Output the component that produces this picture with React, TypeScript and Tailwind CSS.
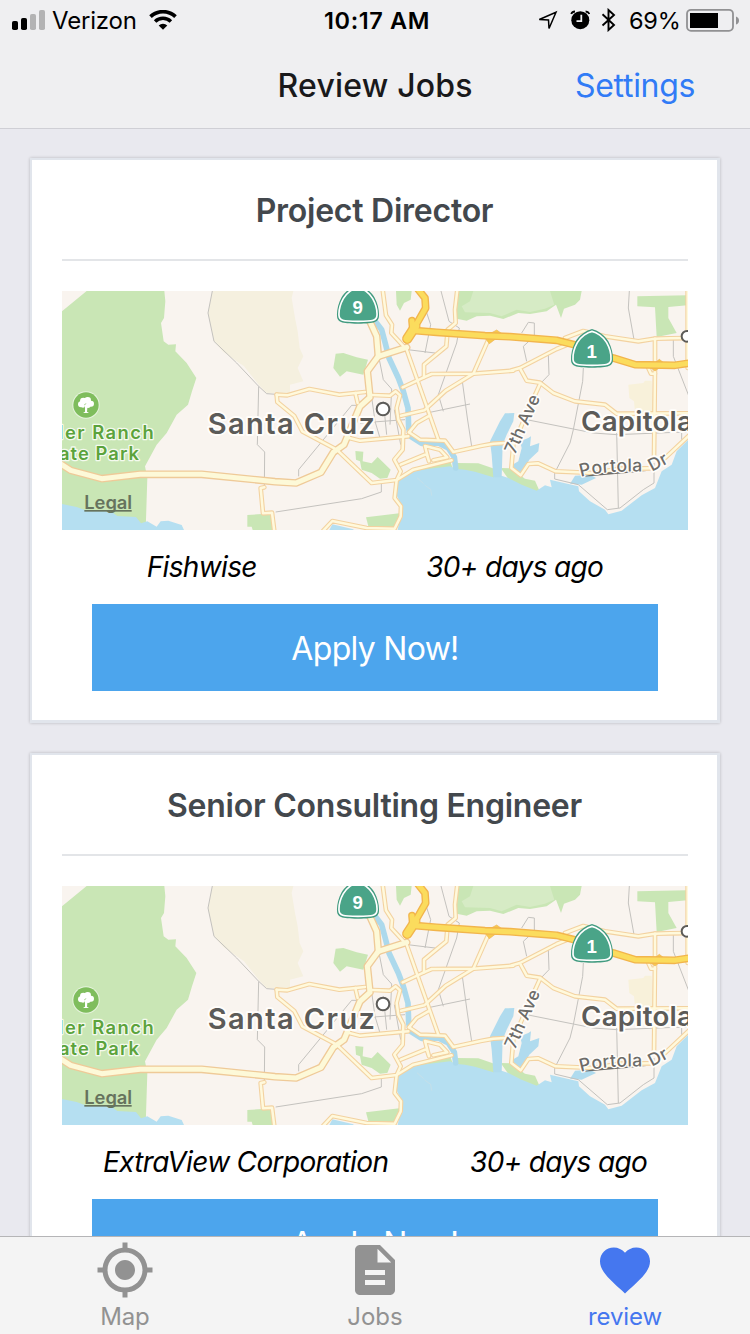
import React, { useId } from "react";
import { MdGpsFixed, MdDescription, MdFavorite } from "react-icons/md";

const mainRoads = [
  "M-10 520 L32 547 L125 572 L240 559 L425 559 L645 581 L708 585 L783 553 L820 493 L852 470 L875 415 L900 355 L930 328 L922 250 L955 205 L1040 178",
  "M955 205 L950 145 L925 90",
];

const minorRoads = [
  "M613 598 L602 600 L609 676 L636 674 L643 730",
  "M650 320 L682 322 L748 303 L838 320 L915 312",
  "M650 320 L652 342 L703 384 L727 430 L830 485 L935 585 L1010 576 L1060 545 L1130 528 L1175 517",
  "M886 315 L893 345",
  "M938 321 L990 323 L1007 310 L1020 322 L1010 360 L1015 395 L1030 425 L1028 485 L1003 515 L1022 550 L1010 576 L1004 630 L1023 655 L1022 685 L1004 722 L920 720 L817 699 L790 728",
  "M868 450 L900 458 L1045 445",
  "M1047 433 L1080 455 L1155 458 L1180 492 L1262 474 L1300 467 L1335 465",
  "M1022 530 L1100 498 L1107 520 L1095 474 L1140 485 L1162 508 L1120 517",
  "M968 5 L978 82 L996 110 L994 135 L1040 185 L1135 455",
  "M1192 5 L1185 65 L1187 105 L1163 125 L1159 175 L1092 230 L1092 268",
  "M1028 298 L1092 268 L1115 258 L1240 257 L1360 248",
  "M1023 383 L1093 367 L1157 308 L1240 257 L1285 155",
  "M1047 433 L1070 405 L1105 385",
  "M1355 247 L1380 240 L1490 183 L1530 167",
  "M1515 150 L1570 129 L1635 145 L1735 160 L1785 152 L1830 151 L1900 150",
  "M1382 245 L1400 278 L1440 284 L1480 315 L1545 340 L1635 350 L1670 377 L1890 376",
  "M1440 288 L1405 365 L1360 470 L1354 540 L1382 562 L1405 528 L1435 526 L1487 550 L1600 555 L1680 542 L1780 541",
  "M1785 152 L1785 238 L1782 510",
  "M1765 240 L1773 257 L1785 257",
  "M1890 440 L1810 515",
  "M1883 5 L1883 240",
];

const highways = [
  "M1075 5 L1095 30 L1097 60 L1070 107 L1040 155",
  "M1056 98 L1058 120",
  "M1068 128 L1130 133 L1275 143 L1350 146 L1490 157 L1550 172 L1660 210 L1725 230 L1845 232 L1890 225",
];

const streets =
  "M457 9 L444 75 L462 160 L530 225 L596 295 L620 317 L648 319 M596 295 L592 470 L614 492 L613 600 M716 565 L716 545 L875 352 L895 352 M647 672 L905 632 L964 612 L964 585 M957 210 L970 275 L995 303 L990 410 M936 335 L945 400 L960 450 M970 340 L980 440 M900 405 L1035 395 M1100 375 L1230 348 M1003 365 L1022 470 M1043 185 L1125 195 M1097 65 L1112 110 L1095 195 M1143 9 L1167 100 L1198 120 L1190 165 L1135 320 L1150 370 M1207 280 L1222 390 L1235 475 M1385 135 L1405 103 L1423 105 L1423 145 L1390 175 L1400 220 M1465 200 L1467 260 L1440 288 M1708 9 L1705 60 L1722 155 M1570 240 L1568 280 L1540 425 L1530 465 L1484 555 L1484 573 L1555 590 L1642 665 L1680 660 L1750 605 L1782 585 L1782 525 M1400 395 L1600 435 L1670 440 L1845 433 L1890 433 M1670 430 L1675 660 M1840 155 L1840 205 L1888 328 M1865 430 L1865 455";

function Shield({ x, y, label }: { x: number; y: number; label: string }) {
  return (
    <g transform={`translate(${x} ${y})`}>
      <path d="M0 -60 C16 -56 38 -43 50 -22 C59 -5 64 16 63 33 C62 50 52 56 0 56 C-52 56 -62 50 -63 33 C-64 16 -59 -5 -50 -22 C-38 -43 -16 -56 0 -60Z" fill="#429b80" />
      <path d="M0 -53 C14 -50 34 -37 44 -19 C53 -3 58 15 57 31 C56 46 47 49 0 49 C-47 49 -56 46 -57 31 C-58 15 -53 -3 -44 -19 C-34 -37 -14 -50 0 -53Z" fill="#4aa488" stroke="#fff" strokeWidth="5" />
      <text x="-1" y="27" textAnchor="middle" className="fill-white font-['Liberation_Sans'] text-[56px] font-bold">{label}</text>
    </g>
  );
}

function CityMap() {
  const portolaLine = useId();
  return (
    <svg viewBox="6 9 1878 717" className="block h-[239px] w-[626px]" fill="none" strokeLinejoin="round" strokeLinecap="round">
      <rect x="6" y="9" width="1878" height="717" fill="#f9f4ef" />
      <path d="M457 9 L444 75 L462 160 L490 192 L552 235 L596 290 L620 316 L690 316 L690 290 L730 280 L713 240 L730 205 L719 180 L713 130 L705 90 L695 30 L700 9Z" fill="#f5f0df" />
      <path d="M1705 290 L1750 285 L1755 278 L1775 278 L1782 375 L1725 372 L1722 340 L1708 330Z" fill="#f8f1da" />
      <g fill="#c9e6b5">
        <path d="M6 70 L80 9 L313 9 L316 40 L312 90 L303 105 L311 160 L325 170 L348 169 L346 190 L380 225 L409 270 L396 310 L384 350 L350 380 L320 435 L290 470 L255 535 L262 570 L257 726 L6 726Z" />
        <path d="M562 681 L640 676 L640 726 L578 726 L575 716 L562 716Z" />
        <path d="M827 197 L850 195 L890 208 L924 215 L910 260 L860 250 L840 266 L820 240Z" />
        <path d="M886 489 L910 491 L908 520 L935 526 L953 507 L992 545 L982 570 L960 572 L935 555 L905 545 L900 520 L888 515Z" />
        <path d="M918 688 L1018 676 L1018 700 L1003 718 L925 715Z" />
        <path d="M1008 9 L1055 9 L1052 35 L1032 45 L1020 68 L1010 50Z" />
        <path d="M1193 9 L1565 9 L1560 35 L1545 50 L1512 62 L1503 90 L1488 50 L1460 70 L1410 78 L1375 75 L1330 93 L1290 83 L1250 85 L1220 98 L1190 92Z" />
        <path d="M1732 25 L1882 22 L1882 52 L1825 57 L1825 90 L1850 135 L1790 147 L1785 58 L1732 55Z" />
        <path d="M1040 560 L1065 540 L1170 518 L1178 540 L1188 525 L1255 526 L1305 543 L1310 575 L1260 565 L1170 550Z" />
        <path d="M1322 540 L1352 541 L1395 572 L1425 578 L1437 605 L1428 614 L1350 580Z" />
      </g>
      <path d="M1205 55 L1230 40 L1240 9 L1470 9 L1483 50 L1455 62 L1410 72 L1370 65 L1325 85 L1290 75 L1215 73Z" fill="#d6ebc5" />
      <g fill="#b5dff1">
        <path d="M6 648 L50 657 L72 665 L150 668 L172 684 L228 687 L243 706 L262 700 L290 716 L302 700 L325 698 L365 711 L372 726 L6 726Z" />
        <path d="M1013 726 L1020 690 L1026 655 L1009 620 L1015 575 L1040 555 L1085 545 L1170 535 L1185 542 L1215 545 L1245 551 L1300 568 L1325 563 L1345 570 L1385 590 L1430 608 L1455 592 L1475 598 L1470 575 L1535 590 L1555 595 L1557 610 L1590 640 L1635 665 L1645 679 L1685 668 L1745 622 L1785 600 L1805 550 L1835 530 L1850 490 L1890 450 L1890 726Z" />
        <path d="M808 726 L817 709 L880 724 L882 730Z" />
      </g>
      <g fill="#b0dbee">
        <path d="M1300 568 L1295 500 L1290 460 L1320 400 L1335 376 L1363 375 L1360 400 L1340 440 L1328 470 L1325 568Z" />
        <path d="M1350 535 L1375 520 L1385 480 L1380 460 L1405 450 L1413 445 L1410 475 L1438 465 L1435 490 L1408 515 L1382 560Z" />
        <path d="M1530 587 L1545 563 L1590 560 L1608 570 L1565 590Z" />
      </g>
      <path d="M942 95 L965 125 L977 170 L987 210 L1015 270 L1030 310 L1044 360 L1046 420 L1052 445 L1085 466 L1135 465 L1165 480 L1183 508 L1187 540" stroke="#acd9ec" strokeWidth="17" />
      <path d="M1072 570 L1090 586 M1095 592 L1112 604 L1115 622" stroke="#cbdfe5" strokeWidth="2" />
      <path d={streets} stroke="#c4c2be" strokeWidth="3" strokeLinecap="butt" />
      <g stroke="#f3d2a0" strokeWidth="14">{minorRoads.map((d) => <path key={d} d={d} />)}</g>
      <g stroke="#efca98" strokeWidth="23">{mainRoads.map((d) => <path key={d} d={d} />)}</g>
      <g stroke="#fff9dc" strokeWidth="7.5">{minorRoads.map((d) => <path key={d} d={d} />)}</g>
      <g stroke="#fdf9d8" strokeWidth="15">{mainRoads.map((d) => <path key={d} d={d} />)}</g>
      <path d="M1288 138 L1310 126 L1330 140Z M1275 150 L1288 167 L1308 152Z M1785 224 L1798 214 L1812 225Z M1768 236 L1785 249 L1800 238Z" fill="#f7c94f" stroke="#efb45a" strokeWidth="2" />
      <g stroke="#f2b54c" strokeWidth="23">{highways.map((d) => <path key={d} d={d} />)}</g>
      <path d="M1066 115 L1042 152" stroke="#f2b54c" strokeWidth="31" />
      <g stroke="#fbdc5d" strokeWidth="15">{highways.map((d) => <path key={d} d={d} />)}</g>
      <path d="M1066 115 L1042 152" stroke="#fbdc5d" strokeWidth="23" />

      <Shield x={894} y={51} label="9" />
      <Shield x={1596} y={183} label="1" />

      <circle cx="78" cy="351" r="41" fill="#e6f3dd" />
      <circle cx="78" cy="351" r="38" fill="#7fbd5d" />
      <g fill="#fff">
        <circle cx="63" cy="349" r="9" />
        <circle cx="70" cy="339" r="10" />
        <circle cx="83" cy="337" r="10" />
        <circle cx="93" cy="347" r="9" />
        <circle cx="84" cy="352" r="8" />
        <circle cx="69" cy="353" r="6" />
        <path d="M75 350 H83 L81 371 L87 375 H69 L75 371Z" />
      </g>

      <g className="font-['Inter'] font-semibold">
        <g className="fill-[#5ba33c] stroke-[#f4faee] [paint-order:stroke] [stroke-linejoin:round]" strokeWidth="8" fontSize="55">
          <text x="281" y="453" textAnchor="end" textLength="305" lengthAdjust="spacing">der Ranch</text>
          <text x="237" y="516" textAnchor="end" textLength="263" lengthAdjust="spacing">tate Park</text>
        </g>
        <g className="fill-[#5c5b58] stroke-[#fffdfa] [paint-order:stroke] [stroke-linejoin:round]" strokeWidth="12">
          <text x="443" y="437" fontSize="87" textLength="502" lengthAdjust="spacing">Santa Cruz</text>
          <text x="1563" y="429" fontSize="83" textLength="336" lengthAdjust="spacing">Capitola</text>
        </g>
      </g>
      <g className="fill-[#6d6c69] stroke-[#fffdfa] font-['Inter'] font-medium [paint-order:stroke] [stroke-linejoin:round]" strokeWidth="10">
        <path id={portolaLine} d="M1563 567 Q1610 553 1680 551 L1760 550" stroke="none" />
        <text transform="translate(1365 501) rotate(-66)" fontSize="52" textLength="188" lengthAdjust="spacing">7th Ave</text>
        <text fontSize="53" letterSpacing="1" strokeWidth="8">
          <textPath href={`#${portolaLine}`} textLength="186">Portola</textPath>
        </text>
        <text transform="translate(1776 551) rotate(-28)" fontSize="52" textLength="58" lengthAdjust="spacing">Dr</text>
      </g>
      <circle cx="969" cy="363" r="19" fill="#fff" stroke="#5c5b58" strokeWidth="6" />
      <circle cx="1881" cy="145" r="16" fill="#fff" stroke="#5c5b58" strokeWidth="6" />
      <g className="fill-[#66735d] font-['Inter'] font-semibold">
        <text x="73" y="662" fontSize="55" textLength="143" lengthAdjust="spacing">Legal</text>
        <rect x="73" y="666" width="142" height="5" />
      </g>
    </svg>
  );
}

function JobCard({ title, company, age }: { title: string; company: string; age: string }) {
  return (
    <article className="h-[565px] shrink-0 border-t-2 border-r-[3px] border-b-[3px] border-l-2 border-[#e1e5ec] bg-white px-[30px] shadow-[0_0_3px_rgba(0,0,0,0.22)]">
      <h2 className="flex h-[99px] items-center justify-center pt-0.5 text-[32px] font-semibold tracking-[-0.25px] whitespace-nowrap text-[#43484d]">{title}</h2>
      <div className="mb-[30px] h-0.5 w-[626px] bg-[#e3e5e8]" />
      <CityMap />
      <div className="flex h-[74px] w-[626px] items-center justify-around text-[28px] tracking-[-0.65px] whitespace-nowrap text-black italic">
        <span>{company}</span>
        <span>{age}</span>
      </div>
      <button className="mx-[30px] flex h-[87px] w-[566px] items-center justify-center bg-[#4ca5ed] pt-0.5 text-[32px] font-normal tracking-[-0.7px] text-white">Apply Now!</button>
    </article>
  );
}

function StatusBar() {
  return (
    <div className="flex h-10 items-center text-[24px] text-black">
      <svg className="ml-3 h-5 w-[33px] shrink-0" viewBox="0 0 33 20">
        <rect y="11" width="6" height="9" rx="1.8" />
        <rect x="9" y="8" width="6" height="12" rx="1.8" />
        <rect x="18" y="4" width="6" height="16" rx="1.8" fill="#b3b3b4" />
        <rect x="27" y="0" width="6" height="20" rx="1.8" fill="#b3b3b4" />
      </svg>
      <span className="ml-[7px] w-[84px] pt-0.5 tracking-[-0.2px] whitespace-nowrap">Verizon</span>
      <svg className="ml-[13px] h-5 w-7 shrink-0" viewBox="0 0 28 20">
        <path d="M1.5 6.7 A18 18 0 0 1 26.5 6.7" fill="none" stroke="#000" strokeWidth="3.7" />
        <path d="M6.1 11.4 A11.3 11.3 0 0 1 21.9 11.4" fill="none" stroke="#000" strokeWidth="3.5" />
        <path d="M9.7 15.4 A6.2 6.2 0 0 1 18.3 15.4 L14 19.8Z" />
      </svg>
      <span className="ml-[147px] w-[109px] pt-0.5 text-[23.5px] font-semibold tracking-[0.6px] whitespace-nowrap">10:17 AM</span>
      <svg className="ml-[105px] h-5 w-5 shrink-0" viewBox="0 0 20 20">
        <path d="M1.3 9.5 L18 2.3 L11 18.5 L10.5 10Z" fill="none" stroke="#000" strokeWidth="1.5" />
      </svg>
      <svg className="ml-3 h-5 w-5 shrink-0" viewBox="0 0 20 20">
        <circle cx="10.3" cy="10.2" r="9" />
        <path d="M1.2 4 Q2.2 1.5 5 1.5 M19.4 4 Q18.4 1.5 15.6 1.5" fill="none" stroke="#000" strokeWidth="1.8" />
        <path d="M11.3 4.7 V11.2 H6.5" fill="none" stroke="#efeff1" strokeWidth="1.8" />
      </svg>
      <svg className="ml-[11px] h-6 w-4 shrink-0" viewBox="0 0 16 24">
        <path d="M1.5 6.3 L13 17 L7.5 22 V2 L13 7 L1.5 17.5" fill="none" stroke="#000" strokeWidth="1.9" />
      </svg>
      <span className="ml-3 w-[51px] pt-0.5 text-[23.5px] tracking-[-0.2px] whitespace-nowrap">69%</span>
      <svg className="ml-[6px] h-6 w-[54px] shrink-0" viewBox="0 0 54 24">
        <rect x="1" y="1.8" width="46" height="21" rx="4" fill="none" stroke="#919193" strokeWidth="1.8" />
        <rect x="4" y="5" width="28" height="15" />
        <path d="M50 8.5 Q53 9.5 53 12.5 Q53 15.5 50 16.5Z" fill="#919193" />
      </svg>
    </div>
  );
}

export default function App() {
  return (
    <div className="flex h-[1334px] w-[750px] flex-col overflow-hidden bg-[#e9e9ef] font-['Inter',sans-serif]">
      <header className="h-[129px] shrink-0 border-b border-[#cfcfd5] bg-[#efeff1]">
        <StatusBar />
        <div className="grid h-[92px] grid-cols-[277.5px_1fr_175px] items-center text-[32px] whitespace-nowrap">
          <h1 className="col-start-2 font-medium tracking-[0.2px] text-[#19191b]">Review Jobs</h1>
          <button className="text-left tracking-[-0.3px] text-[#317bf6]">Settings</button>
        </div>
      </header>
      <main className="flex min-h-0 flex-1 flex-col gap-[30px] overflow-hidden px-[30px] pt-[29px]">
        <JobCard title="Project Director" company="Fishwise" age="30+ days ago" />
        <JobCard title="Senior Consulting Engineer" company="ExtraView Corporation" age="30+ days ago" />
      </main>
      <nav className="grid h-[98px] shrink-0 grid-cols-3 border-t border-[#b5b5b7] bg-[#f4f4f4] text-[24px] text-[#929292]">
        <button className="flex flex-col items-center pt-[3px]">
          <MdGpsFixed size={60} />
          <span className="mt-[2px] leading-[29px] tracking-[-0.2px]">Map</span>
        </button>
        <button className="flex flex-col items-center pt-[3px]">
          <MdDescription size={60} />
          <span className="mt-[2px] leading-[29px]">Jobs</span>
        </button>
        <button className="flex flex-col items-center pt-[3px] text-[#4577ef]">
          <MdFavorite size={60} />
          <span className="mt-[2px] leading-[29px] tracking-[-0.1px]">review</span>
        </button>
      </nav>
    </div>
  );
}
